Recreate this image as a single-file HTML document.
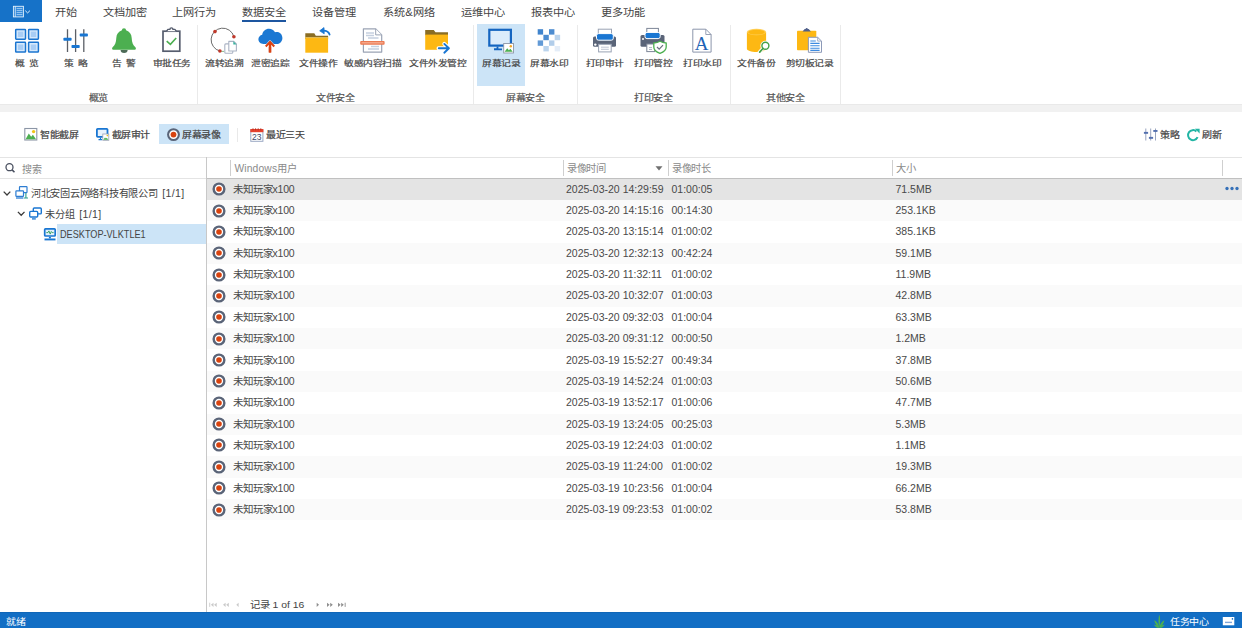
<!DOCTYPE html>
<html lang="zh-CN">
<head>
<meta charset="utf-8">
<title>屏幕录像</title>
<style>
*{box-sizing:border-box;margin:0;padding:0}
html,body{width:1242px;height:628px;overflow:hidden;background:#fff}
body{position:relative;font-family:"Liberation Sans",sans-serif;color:#444;font-size:10.5px}
.abs{position:absolute}
/* top tabs */
#appbtn{position:absolute;left:0;top:0;width:41.8px;height:21.5px;background:#1672c8}
.tab{position:absolute;top:0.9px;height:22px;line-height:23px;font-size:11.2px;color:#444;white-space:nowrap;transform:translateX(-50%) scaleY(0.93)}
#tabul{position:absolute;left:242px;top:19.6px;width:44px;height:2.2px;background:#1d56a0}
/* ribbon */
#ribbon{position:absolute;left:0;top:22px;width:1242px;height:82.2px;background:#fff}
#band{position:absolute;left:0;top:104.2px;width:1242px;height:7.5px;background:#f1f1f1;border-top:1.2px solid #e9e9e9}
.rsep{position:absolute;top:25px;width:1px;height:79px;background:#eaeaea}
.rlbl{position:absolute;top:57.8px;transform:translateX(-50%) scaleY(0.8);font-size:9.8px;color:#424242;line-height:12px;white-space:nowrap;letter-spacing:-0.5px}
.rlbl.sp{word-spacing:2.6px}
.rlbl,.glbl,.tbtn{-webkit-text-stroke:0.22px currentColor}
.rsel{background:#cce4f7}
.srch{height:20px;line-height:20.5px;font-size:10px;color:#8a8a8a}
.glbl{position:absolute;top:91.6px;letter-spacing:-0.5px;transform-origin:50% 50%;font-size:10px;line-height:12px;color:#555;transform:translateX(-50%) scaleY(0.88);white-space:nowrap}
/* toolbar */
.tbtn{position:absolute;top:123.5px;height:20.6px;line-height:21px;font-size:10px;color:#444;white-space:nowrap;letter-spacing:-0.45px;transform:scaleY(0.93)}
/* left */
#hline{position:absolute;left:0;top:157px;width:1242px;height:1px;background:#e4e4e4}
#vsplit{position:absolute;left:206px;top:157px;width:1px;height:455.2px;background:#c8c8c8}
#searchline{position:absolute;left:0;top:178px;width:206px;height:1px;background:#e4e4e4}
.tree{position:absolute;height:20.3px;line-height:20.3px;font-size:10.2px;color:#444;white-space:nowrap;word-spacing:2.2px;letter-spacing:-0.27px}
.tree .cnt{font-size:10.5px;letter-spacing:0.35px}
.tree .host{display:inline-block;font-size:10.5px;transform:scaleX(0.87);transform-origin:0 50%;letter-spacing:0}
/* grid */
#ghead{position:absolute;left:207px;top:158px;width:1035px;height:20px;background:#fff}
#gheadline{position:absolute;left:207px;top:177.7px;width:1035px;height:1.3px;background:#c0c0c0}
.hsep{position:absolute;top:159.5px;width:1px;height:16.5px;background:#cfcfcf}
.htxt{position:absolute;top:158.7px;height:20px;line-height:20.5px;font-size:10.3px;color:#8a8a8a;white-space:nowrap;letter-spacing:-0.4px}
.row{position:absolute;left:207px;width:1035px;height:21.35px;line-height:21.6px;font-size:10.5px;color:#494949;white-space:nowrap}
.row.alt{background:#fafafa}
.row.sel{background:#e4e4e4}
.row span{position:absolute;top:0}
.row .rec{position:absolute;left:5.3px;top:3.6px;width:14px;height:14px}
.c1{left:26.3px;letter-spacing:-0.2px}.c2{left:359px}.c3{left:464.5px}.c4{left:688.5px}
/* status */
#status{position:absolute;left:0;top:612.2px;width:1242px;height:15.8px;background:#126ec4;border-top:1px solid #0f66b8;color:#fff;font-size:10px;line-height:16px}
#status span{top:1.2px;letter-spacing:-0.45px;transform:scaleY(0.88)}
#pager{position:absolute;left:207px;top:596.9px;height:16px;line-height:16px;font-size:10.4px;color:#444;white-space:nowrap;transform:scaleY(0.9)}
</style>
</head>
<body>
<!-- tab bar -->
<div id="appbtn">
<svg class="abs" style="left:0;top:0" width="42" height="22" viewBox="0 0 42 22"><rect x="13.400" y="6.300" width="10" height="10.600" fill="#2f86d8" stroke="#e4f1fc" stroke-width="0.900"/><path d="M15.300 6.300v10.600" stroke="#e4f1fc" stroke-width="0.800"/><path d="M16.600 8.600h5.800M16.600 10.600h5.800M16.600 12.600h5.800M16.600 14.600h5.800" stroke="#9cc9f3" stroke-width="1" fill="none"/><path d="M25.300 10.700l2.300 2.200 2.300-2.200" stroke="#e4f1fc" stroke-width="1" fill="none"/></svg>
</div>
<div class="tab" style="left:66px">开始</div>
<div class="tab" style="left:125px">文档加密</div>
<div class="tab" style="left:194px">上网行为</div>
<div class="tab" style="left:264px">数据安全</div>
<div class="tab" style="left:334px">设备管理</div>
<div class="tab" style="left:409px">系统&amp;网络</div>
<div class="tab" style="left:483px">运维中心</div>
<div class="tab" style="left:553px">报表中心</div>
<div class="tab" style="left:623px">更多功能</div>
<div id="tabul"></div>

<!-- ribbon -->
<div id="ribbon"></div>
<div id="band"></div>
<div class="rsep" style="left:197px"></div>
<div class="rsep" style="left:473px"></div>
<div class="rsep" style="left:577px"></div>
<div class="rsep" style="left:730px"></div>
<div class="rsep" style="left:840px"></div>

<div class="rlbl sp" style="left:27px">概 览</div>
<div class="rlbl sp" style="left:76px">策 略</div>
<div class="rlbl sp" style="left:124px">告 警</div>
<div class="rlbl" style="left:171.5px">审批任务</div>
<div class="rlbl" style="left:224px">流转追溯</div>
<div class="rlbl" style="left:270px">泄密追踪</div>
<div class="rlbl" style="left:318px">文件操作</div>
<div class="rlbl" style="left:372.5px">敏感内容扫描</div>
<div class="rlbl" style="left:437.5px">文件外发管控</div>
<div class="abs rsel" style="left:477px;top:23.9px;width:47.8px;height:62px"></div>
<div class="rlbl" style="left:501px">屏幕记录</div>
<div class="rlbl" style="left:549px">屏幕水印</div>
<div class="rlbl" style="left:604.5px">打印审计</div>
<div class="rlbl" style="left:653px">打印管控</div>
<div class="rlbl" style="left:702px">打印水印</div>
<div class="rlbl" style="left:756px">文件备份</div>
<div class="rlbl" style="left:809.5px">剪切板记录</div>
<svg class="abs" style="left:0;top:0" width="1242" height="110" viewBox="0 0 1242 110">
<!-- overview grid -->
<g fill="#d6e9fc" stroke="#1b75d0" stroke-width="1.5">
<rect x="15.7" y="29.4" width="9.8" height="9.8" rx="0.6"/><rect x="28.6" y="29.4" width="9.8" height="9.8" rx="0.6"/>
<rect x="15.7" y="42.3" width="9.8" height="9.8" rx="0.6"/><rect x="28.6" y="42.3" width="9.8" height="9.8" rx="0.6"/>
</g>
<g fill="#a8cdf5"><rect x="17.9" y="31.6" width="5.4" height="5.4"/><rect x="30.8" y="31.6" width="5.4" height="5.4"/><rect x="17.9" y="44.5" width="5.4" height="5.4"/><rect x="30.8" y="44.5" width="5.4" height="5.4"/></g>
<!-- sliders -->
<g stroke="#5b5f66" stroke-width="1.3" fill="none"><path d="M67.5 29.3V52M75.6 29.3V52M83.8 29.3V52"/></g>
<g fill="#1976d2"><rect x="63.4" y="37.8" width="8.2" height="3" rx="0.8"/><rect x="71.5" y="45" width="8.2" height="3" rx="0.8"/><rect x="79.7" y="33.6" width="8.2" height="3" rx="0.8"/></g>
<!-- bell -->
<path d="M120.6 49.9h7a3.5 3 0 0 1-7 0z" fill="#4d6b57"/>
<path d="M121.900 30.300A2.100 2.100 0 0 1 126.100 30.300C129.700 31.400 131.500 34.300 131.700 38C131.900 42.400 132.900 45 135.400 47.200C136.300 48 136 49.700 134.800 49.700H113.200C112 49.700 111.700 48 112.600 47.200C115.100 45 116.100 42.400 116.300 38C116.500 34.300 118.300 31.400 121.900 30.300Z" fill="#4caf50"/>
<!-- clipboard check -->
<rect x="163" y="31.200" width="16.800" height="20" fill="#fff" stroke="#565d6e" stroke-width="1.7"/>
<path d="M166.600 31.200l1.300-1.800h2a1.500 1.500 0 0 1 3 0h2l1.300 1.800" fill="#fff" stroke="#565d6e" stroke-width="1.400" stroke-linejoin="round"/>
<path d="M166.700 41.100l3.700 3.300 5.800-6.400" fill="none" stroke="#4caf50" stroke-width="1.600"/>
<!-- trace circle -->
<path d="M233.900 36.600A11.600 11.600 0 1 0 219.900 51" fill="none" stroke="#5a5a5a" stroke-width="0.900"/>
<path d="M219.900 51A11.600 11.600 0 0 0 224 51.400" fill="none" stroke="#7ab27a" stroke-width="0.900"/>
<g fill="#c0392b"><circle cx="215" cy="31.600" r="1.800"/><circle cx="233.900" cy="36.800" r="1.800"/><circle cx="219.900" cy="51" r="1.800"/></g>
<rect x="224.800" y="43.900" width="8" height="9.300" rx="1" fill="#fff" stroke="#aab3c4" stroke-width="1.100"/>
<path d="M228.800 41.400h5l2.600 2.600v7h-7.600z" fill="#fff" stroke="#aab3c4" stroke-width="1.100" stroke-linejoin="round"/>
<path d="M233.300 41.200l3.300 3.300h-3.300z" fill="#3bb3a0"/>
<!-- cloud upload -->
<path d="M263.500 44c-2.900 0-5.100-2.100-5.100-4.700 0-2.300 1.600-4.100 3.800-4.600 0.500-3.500 3.300-6 6.800-6 2.600 0 4.900 1.400 6 3.600 0.600-0.200 1.300-0.300 1.900-0.300 3.100 0 5.500 2.600 5.500 6 0 3.300-2.400 6-5.400 6z" fill="#1b78d3"/>
<path d="M270 40.400l5 5.400-1.500 1.400-2.300-2.500v7.800h-2.400v-7.800l-2.300 2.500-1.500-1.400z" fill="#d84315" stroke="#fff" stroke-width="1" paint-order="stroke"/>
<path d="M268.800 47v5.500h2.400V47z" fill="#d84315"/>
<!-- folder op -->
<path d="M305.300 33.200h9l1.500 2.500h12.300v3h-22.800z" fill="#8a6d24"/>
<rect x="305.300" y="37.600" width="22.800" height="15.100" fill="#fdb813"/>
<path d="M305.300 37.600h22.800" stroke="#ffe08a" stroke-width="0.600"/>
<path d="M329.600 34.600c-0.800-2.600-3.200-4.100-6.600-4" fill="none" stroke="#1976d2" stroke-width="1.800" stroke-linecap="round"/>
<path d="M324 27.600l-4.300 3.200 4.500 3z" fill="#1976d2" stroke="#1976d2" stroke-width="0.800" stroke-linejoin="round"/>
<!-- sensitive scan -->
<path d="M363.400 28.900h12.300l6 6v17.200h-18.300z" fill="#fff" stroke="#9aa3b4" stroke-width="1.200" stroke-linejoin="round"/>
<path d="M375.700 28.900v6h6" fill="#fff" stroke="#9aa3b4" stroke-width="1" stroke-linejoin="round"/>
<g stroke="#c5d0df" stroke-width="1.300"><path d="M366 33h8M366 35.500h8M368 38h10.500M371 46.500h8M368 49h11"/></g>
<rect x="360.200" y="40.900" width="24.400" height="3.900" rx="1" fill="#ec7a52"/>
<path d="M361.500 42.850h21.800" stroke="#f9c6b2" stroke-width="0.900"/>
<!-- folder out -->
<path d="M425.200 29.900h8.600l1.700 2.400h12.500v3h-22.800z" fill="#8a6d24"/>
<rect x="425.200" y="34.600" width="22.800" height="15.200" fill="#fdb813"/>
<path d="M438.500 48.300h10M444.300 43.900l4.600 4.400-4.600 4.400" fill="none" stroke="#fff" stroke-width="4" stroke-linecap="round" stroke-linejoin="round"/>
<path d="M438.800 48.300h9.500M444.300 43.900l4.600 4.400-4.600 4.400" fill="none" stroke="#1976d2" stroke-width="1.900" stroke-linecap="round" stroke-linejoin="round"/>
<!-- screen record (selected) -->
<rect x="489.300" y="29.800" width="21.600" height="15.800" fill="#dcecfb" stroke="#1565c0" stroke-width="2.200"/>
<path d="M497.500 46.500v2.600h-3.500M494 49.300h8" stroke="#1565c0" stroke-width="1.800" fill="none"/>
<rect x="503.700" y="43.500" width="9.800" height="9.500" fill="#fff" stroke="#8c96a6" stroke-width="0.900"/>
<path d="M504.600 51.800l2.600-3.600 1.700 2 1.500-1.400 2.300 3z" fill="#4caf50"/>
<circle cx="510.800" cy="46.200" r="1.200" fill="#f5a623"/>
<!-- screen watermark -->
<g fill="#1f6fc4">
<rect x="537.700" y="29.200" width="5.400" height="5.400" opacity="0.850"/><rect x="549" y="29.200" width="5.400" height="5.400" opacity="0.800"/>
<rect x="543.400" y="34.800" width="5.400" height="5.400" opacity="0.800"/><rect x="554.700" y="34.800" width="5.400" height="5.400" opacity="0.300"/>
<rect x="537.700" y="40.400" width="5.400" height="5.400" opacity="0.700"/><rect x="549" y="40.400" width="5.400" height="5.400" opacity="0.350"/>
<rect x="543.400" y="46" width="5.400" height="5.400" opacity="0.300"/><rect x="554.700" y="46" width="5.400" height="5.400" opacity="0.120"/>
</g>
<!-- printer audit -->
<rect x="598.300" y="29.200" width="13.200" height="7" fill="#fff" stroke="#9aa3b4" stroke-width="1"/>
<rect x="593" y="36.400" width="23" height="10.400" rx="1.500" fill="#5a6478"/>
<rect x="596.500" y="33.600" width="16.800" height="6.600" rx="2" fill="#1976d2" stroke="#fff" stroke-width="1"/>
<circle cx="595.300" cy="44.600" r="1.200" fill="#fff"/>
<rect x="598.600" y="44.300" width="12.600" height="7.600" fill="#fff" stroke="#9aa3b4" stroke-width="1"/>
<path d="M601 47.200h7.800M601 49.300h7.800" stroke="#b8c0cf" stroke-width="0.900"/>
<!-- printer control -->
<rect x="646.800" y="28.400" width="11.600" height="6" fill="#fff" stroke="#7d8697" stroke-width="1"/>
<rect x="640.500" y="35" width="24" height="11.800" rx="1.500" fill="#5a6478"/>
<rect x="645" y="32.400" width="15.200" height="6.200" rx="2" fill="#1976d2" stroke="#fff" stroke-width="1"/>
<circle cx="643" cy="39" r="1" fill="#fff"/>
<rect x="646.800" y="44" width="8" height="7.600" fill="#fff" stroke="#7d8697" stroke-width="1"/>
<path d="M649 47.600h3M649 49.500h3" stroke="#9aa3b4" stroke-width="0.800"/>
<path d="M660 41.200c2 1.200 4 1.700 6.200 1.800v4c0 3-2.400 5-6.200 6.300-3.800-1.300-6.200-3.300-6.200-6.300v-4c2.200-0.100 4.200-0.600 6.200-1.800z" fill="#fff" stroke="#4caf50" stroke-width="1.300" stroke-linejoin="round"/>
<path d="M657 47l2.200 2.200 3.800-4" fill="none" stroke="#6b7280" stroke-width="1.200"/>
<!-- print watermark doc A -->
<path d="M692.800 29.200h13l5.300 5.300v17.600h-18.300z" fill="#fff" stroke="#8c96ac" stroke-width="1" stroke-linejoin="round"/>
<path d="M705.800 29.200v5.300h5.300" fill="none" stroke="#8c96ac" stroke-width="0.900"/>
<text x="701.700" y="49.600" font-family="Liberation Serif,serif" font-size="19" fill="#1e63b5" text-anchor="middle">A</text>
<!-- file backup -->
<path d="M746.900 32v16.800c0 1.800 4.300 3.200 9.600 3.200s9.600-1.400 9.600-3.200V32z" fill="#fdb813"/>
<ellipse cx="756.500" cy="32" rx="9.600" ry="3.300" fill="#ffcf55"/><ellipse cx="756.500" cy="32.200" rx="8.300" ry="2.400" fill="#fdb813"/>
<path d="M762.800 48.500l-3.300 3.700" stroke="#fff" stroke-width="3.400" stroke-linecap="round"/>
<circle cx="765.400" cy="45.800" r="3.500" fill="#fff" stroke="#fff" stroke-width="3"/>
<circle cx="765.400" cy="45.800" r="3.500" fill="#fff" stroke="#43a047" stroke-width="1.400"/>
<path d="M762.900 48.500l-3.200 3.600" stroke="#43a047" stroke-width="1.700" stroke-linecap="round"/>
<!-- clipboard record -->
<rect x="797" y="30.800" width="19.300" height="19.500" rx="0.800" fill="#fdb813"/>
<path d="M802.500 31.600l2.200-2.600h0.900a1.100 1.100 0 0 1 2.200 0h0.900l2.200 2.600z" fill="#50608a"/>
<path d="M808.400 37.300h9.300l3.800 3.800v11.200h-13.100z" fill="#fff" stroke="#8c9ab8" stroke-width="1" stroke-linejoin="round"/>
<path d="M817.700 37.300v3.800h3.800" fill="none" stroke="#8c9ab8" stroke-width="0.800"/>
<g stroke="#3d8be0" stroke-width="1.100"><path d="M810.300 41h5.500M810.300 43.400h9.300M810.300 45.800h9.300M810.300 48.200h9.300M810.300 50.400h9.300"/></g>
</svg>


<div class="glbl" style="left:98px">概览</div>
<div class="glbl" style="left:335px">文件安全</div>
<div class="glbl" style="left:525px">屏幕安全</div>
<div class="glbl" style="left:653px">打印安全</div>
<div class="glbl" style="left:785px">其他安全</div>

<!-- toolbar -->

<div class="abs" style="left:158.8px;top:124px;width:70.2px;height:20.4px;background:#cce4f7"></div>
<div class="abs" style="left:237px;top:128px;width:1px;height:13.5px;background:#e9e9e9"></div>
<div class="tbtn" style="left:40.2px">智能截屏</div>
<div class="tbtn" style="left:111.7px">截屏审计</div>
<div class="tbtn" style="left:182.2px">屏幕录像</div>
<div class="tbtn" style="left:266px">最近三天</div>
<div class="tbtn" style="left:1160px">策略</div>
<div class="tbtn" style="left:1202.2px">刷新</div>
<svg class="abs" style="left:0;top:110px" width="1242" height="46" viewBox="0 110 1242 46">
<!-- photo -->
<rect x="24.800" y="128.500" width="12" height="11.500" fill="#fff" stroke="#8c96a6" stroke-width="1.100"/>
<path d="M25.600 139.200l3.200-5.600 2.400 3.100 1.700-1.900 3.100 4.400z" fill="#4caf50"/>
<circle cx="33.600" cy="131.600" r="1.700" fill="#f0c419"/>
<!-- monitor w/ photo -->
<rect x="96.900" y="128.800" width="10.600" height="8" rx="0.800" fill="#e8f2fc" stroke="#1976d2" stroke-width="1.800"/>
<path d="M100.500 137.400v1.800M98.500 139.600h3.500" stroke="#1976d2" stroke-width="1.200"/>
<rect x="102.800" y="134" width="6" height="6.300" fill="#fff" stroke="#9aa3b4" stroke-width="0.800"/>
<path d="M103.300 139.700l1.700-2.300 1 1.100 0.800-0.700 1.500 1.900z" fill="#4caf50"/>
<circle cx="107.300" cy="135.600" r="0.800" fill="#f2c21a"/>
<!-- record -->
<circle cx="173.500" cy="134.600" r="5.400" fill="#fff" stroke="#5a6478" stroke-width="2.100"/>
<circle cx="173.500" cy="134.600" r="2.900" fill="#d8430f"/>
<!-- calendar -->
<rect x="250.800" y="130" width="12.100" height="11.300" fill="#fff" stroke="#9aa8c4" stroke-width="1"/>
<rect x="250.300" y="129" width="13.100" height="3.200" fill="#e5422e"/>
<path d="M253 128.300v2M255.600 128.300v2M258.200 128.300v2M260.800 128.300v2" stroke="#b52a1c" stroke-width="0.900"/>
<text x="256.850" y="140.200" font-family="Liberation Sans,sans-serif" font-size="8.500" fill="#3c4a6a" text-anchor="middle">23</text>
<!-- sliders small -->
<g stroke="#8d9bb8" stroke-width="0.900"><path d="M1145.800 128.500v12M1150.700 128.500v12M1155.500 128.500v12"/></g>
<g fill="#536fae"><rect x="1143.900" y="131.900" width="4.200" height="1.900"/><rect x="1148.900" y="136.900" width="4.200" height="1.900"/><rect x="1153.300" y="130" width="4.200" height="1.900"/></g>
<!-- refresh -->
<path d="M1197.600 137.200a5 5 0 1 1-1.200-5.800" fill="none" stroke="#22b5a4" stroke-width="2"/>
<path d="M1194.900 128.700h4.700v4.900z" fill="#22b5a4"/>
</svg>


<!-- left panel -->
<div id="hline"></div>
<div id="searchline"></div>
<div id="vsplit"></div>

<div class="abs" style="left:57px;top:224px;width:149px;height:20.2px;background:#cce4f7"></div>
<div class="abs srch" style="left:22px;top:159.5px">搜索</div>
<div class="tree" style="left:31px;top:183.3px">河北安固云网络科技有限公司 <span class="cnt">[1/1]</span></div>
<div class="tree" style="left:45.4px;top:203.6px">未分组 <span class="cnt">[1/1]</span></div>
<div class="tree" style="left:59.8px;top:223.9px"><span class="host">DESKTOP-VLKTLE1</span></div>
<svg class="abs" style="left:0;top:158px" width="206" height="92" viewBox="0 158 206 92">
<!-- search -->
<circle cx="9.500" cy="167.200" r="3.500" fill="none" stroke="#4a5060" stroke-width="1.300"/>
<path d="M12.100 169.900l2.400 2.400" stroke="#4a5060" stroke-width="1.600"/>
<!-- chevrons -->
<path d="M3.700 191.600l3.300 3.400 3.300-3.400" fill="none" stroke="#3a3a3a" stroke-width="1.300"/>
<path d="M17.900 211.900l3.300 3.400 3.300-3.400" fill="none" stroke="#3a3a3a" stroke-width="1.300"/>
<!-- company icon: two monitors -->
<rect x="19.500" y="186.700" width="7.500" height="6" rx="0.600" fill="#fff" stroke="#2d7dd2" stroke-width="1.200"/>
<path d="M25.900 193v4.600M24 198h4" stroke="#2a9d8f" stroke-width="1.100"/>
<rect x="15.900" y="190.900" width="7.600" height="5.400" rx="0.600" fill="#fff" stroke="#2d7dd2" stroke-width="1.200"/>
<path d="M16 198h7.400" stroke="#2d7dd2" stroke-width="1.300"/>
<!-- group icon -->
<rect x="33.300" y="208" width="8" height="5.900" rx="1" fill="#fff" stroke="#1976d2" stroke-width="1.400"/>
<rect x="29.700" y="211.400" width="8" height="5.600" rx="1" fill="#fff" stroke="#1976d2" stroke-width="1.400"/>
<path d="M32 218.900h3.800" stroke="#1976d2" stroke-width="1.300"/>
<!-- desktop icon -->
<rect x="44.700" y="228.800" width="10.500" height="7.200" rx="0.800" fill="#e3f0fd" stroke="#1976d2" stroke-width="1.700"/>
<path d="M46.300 232.600h1.700l0.900-1.700 1.300 3.200 1.100-2.600 0.900 1.100h1.400" fill="none" stroke="#2e9d5b" stroke-width="0.900"/>
<path d="M49.900 236.800v1.600" stroke="#1976d2" stroke-width="2"/>
<rect x="44.500" y="238.500" width="11" height="1.900" fill="#1976d2"/>
</svg>


<!-- grid -->
<div id="ghead"></div>
<div class="hsep" style="left:230px"></div>
<div class="hsep" style="left:563px"></div>
<div class="hsep" style="left:668px"></div>
<div class="hsep" style="left:892px"></div>
<div class="hsep" style="left:1222px"></div>
<div class="htxt" style="left:234.4px"><span style="letter-spacing:0.15px">Windows</span>用户</div>
<div class="htxt" style="left:567px">录像时间</div>
<div class="htxt" style="left:672px">录像时长</div>
<div class="htxt" style="left:896px">大小</div>
<svg class="abs" style="left:655px;top:165.5px" width="8" height="5" viewBox="0 0 8 5"><path d="M0.5 0.3h7L4 4.4z" fill="#707070"/></svg>
<div class="row sel" style="top:178.70px"><svg class="rec" viewBox="0 0 14 14"><circle cx="7" cy="7" r="5.35" fill="#fff" stroke="#5a6478" stroke-width="2.4"/><circle cx="7" cy="7" r="2.8" fill="#d8430f"/></svg><span class="c1">未知玩家x100</span><span class="c2">2025-03-20 14:29:59</span><span class="c3">01:00:05</span><span class="c4">71.5MB</span></div>
<div class="row alt" style="top:200.05px"><svg class="rec" viewBox="0 0 14 14"><circle cx="7" cy="7" r="5.35" fill="#fff" stroke="#5a6478" stroke-width="2.4"/><circle cx="7" cy="7" r="2.8" fill="#d8430f"/></svg><span class="c1">未知玩家x100</span><span class="c2">2025-03-20 14:15:16</span><span class="c3">00:14:30</span><span class="c4">253.1KB</span></div>
<div class="row" style="top:221.40px"><svg class="rec" viewBox="0 0 14 14"><circle cx="7" cy="7" r="5.35" fill="#fff" stroke="#5a6478" stroke-width="2.4"/><circle cx="7" cy="7" r="2.8" fill="#d8430f"/></svg><span class="c1">未知玩家x100</span><span class="c2">2025-03-20 13:15:14</span><span class="c3">01:00:02</span><span class="c4">385.1KB</span></div>
<div class="row alt" style="top:242.75px"><svg class="rec" viewBox="0 0 14 14"><circle cx="7" cy="7" r="5.35" fill="#fff" stroke="#5a6478" stroke-width="2.4"/><circle cx="7" cy="7" r="2.8" fill="#d8430f"/></svg><span class="c1">未知玩家x100</span><span class="c2">2025-03-20 12:32:13</span><span class="c3">00:42:24</span><span class="c4">59.1MB</span></div>
<div class="row" style="top:264.10px"><svg class="rec" viewBox="0 0 14 14"><circle cx="7" cy="7" r="5.35" fill="#fff" stroke="#5a6478" stroke-width="2.4"/><circle cx="7" cy="7" r="2.8" fill="#d8430f"/></svg><span class="c1">未知玩家x100</span><span class="c2">2025-03-20 11:32:11</span><span class="c3">01:00:02</span><span class="c4">11.9MB</span></div>
<div class="row alt" style="top:285.45px"><svg class="rec" viewBox="0 0 14 14"><circle cx="7" cy="7" r="5.35" fill="#fff" stroke="#5a6478" stroke-width="2.4"/><circle cx="7" cy="7" r="2.8" fill="#d8430f"/></svg><span class="c1">未知玩家x100</span><span class="c2">2025-03-20 10:32:07</span><span class="c3">01:00:03</span><span class="c4">42.8MB</span></div>
<div class="row" style="top:306.80px"><svg class="rec" viewBox="0 0 14 14"><circle cx="7" cy="7" r="5.35" fill="#fff" stroke="#5a6478" stroke-width="2.4"/><circle cx="7" cy="7" r="2.8" fill="#d8430f"/></svg><span class="c1">未知玩家x100</span><span class="c2">2025-03-20 09:32:03</span><span class="c3">01:00:04</span><span class="c4">63.3MB</span></div>
<div class="row alt" style="top:328.15px"><svg class="rec" viewBox="0 0 14 14"><circle cx="7" cy="7" r="5.35" fill="#fff" stroke="#5a6478" stroke-width="2.4"/><circle cx="7" cy="7" r="2.8" fill="#d8430f"/></svg><span class="c1">未知玩家x100</span><span class="c2">2025-03-20 09:31:12</span><span class="c3">00:00:50</span><span class="c4">1.2MB</span></div>
<div class="row" style="top:349.50px"><svg class="rec" viewBox="0 0 14 14"><circle cx="7" cy="7" r="5.35" fill="#fff" stroke="#5a6478" stroke-width="2.4"/><circle cx="7" cy="7" r="2.8" fill="#d8430f"/></svg><span class="c1">未知玩家x100</span><span class="c2">2025-03-19 15:52:27</span><span class="c3">00:49:34</span><span class="c4">37.8MB</span></div>
<div class="row alt" style="top:370.85px"><svg class="rec" viewBox="0 0 14 14"><circle cx="7" cy="7" r="5.35" fill="#fff" stroke="#5a6478" stroke-width="2.4"/><circle cx="7" cy="7" r="2.8" fill="#d8430f"/></svg><span class="c1">未知玩家x100</span><span class="c2">2025-03-19 14:52:24</span><span class="c3">01:00:03</span><span class="c4">50.6MB</span></div>
<div class="row" style="top:392.20px"><svg class="rec" viewBox="0 0 14 14"><circle cx="7" cy="7" r="5.35" fill="#fff" stroke="#5a6478" stroke-width="2.4"/><circle cx="7" cy="7" r="2.8" fill="#d8430f"/></svg><span class="c1">未知玩家x100</span><span class="c2">2025-03-19 13:52:17</span><span class="c3">01:00:06</span><span class="c4">47.7MB</span></div>
<div class="row alt" style="top:413.55px"><svg class="rec" viewBox="0 0 14 14"><circle cx="7" cy="7" r="5.35" fill="#fff" stroke="#5a6478" stroke-width="2.4"/><circle cx="7" cy="7" r="2.8" fill="#d8430f"/></svg><span class="c1">未知玩家x100</span><span class="c2">2025-03-19 13:24:05</span><span class="c3">00:25:03</span><span class="c4">5.3MB</span></div>
<div class="row" style="top:434.90px"><svg class="rec" viewBox="0 0 14 14"><circle cx="7" cy="7" r="5.35" fill="#fff" stroke="#5a6478" stroke-width="2.4"/><circle cx="7" cy="7" r="2.8" fill="#d8430f"/></svg><span class="c1">未知玩家x100</span><span class="c2">2025-03-19 12:24:03</span><span class="c3">01:00:02</span><span class="c4">1.1MB</span></div>
<div class="row alt" style="top:456.25px"><svg class="rec" viewBox="0 0 14 14"><circle cx="7" cy="7" r="5.35" fill="#fff" stroke="#5a6478" stroke-width="2.4"/><circle cx="7" cy="7" r="2.8" fill="#d8430f"/></svg><span class="c1">未知玩家x100</span><span class="c2">2025-03-19 11:24:00</span><span class="c3">01:00:02</span><span class="c4">19.3MB</span></div>
<div class="row" style="top:477.60px"><svg class="rec" viewBox="0 0 14 14"><circle cx="7" cy="7" r="5.35" fill="#fff" stroke="#5a6478" stroke-width="2.4"/><circle cx="7" cy="7" r="2.8" fill="#d8430f"/></svg><span class="c1">未知玩家x100</span><span class="c2">2025-03-19 10:23:56</span><span class="c3">01:00:04</span><span class="c4">66.2MB</span></div>
<div class="row alt" style="top:498.95px"><svg class="rec" viewBox="0 0 14 14"><circle cx="7" cy="7" r="5.35" fill="#fff" stroke="#5a6478" stroke-width="2.4"/><circle cx="7" cy="7" r="2.8" fill="#d8430f"/></svg><span class="c1">未知玩家x100</span><span class="c2">2025-03-19 09:23:53</span><span class="c3">01:00:02</span><span class="c4">53.8MB</span></div>

<div id="gheadline"></div>
<svg class="abs" style="left:1225px;top:186px" width="14" height="5" viewBox="0 0 14 5"><circle cx="2" cy="2.5" r="1.65" fill="#3570b8"/><circle cx="7" cy="2.5" r="1.65" fill="#3570b8"/><circle cx="12" cy="2.5" r="1.65" fill="#3570b8"/></svg>


<div id="pager" style="left:249.6px">记录 1 of 16</div>
<svg class="abs" style="left:207px;top:598px" width="150" height="14" viewBox="207 598 150 14">
<g fill="#cacaca">
<rect x="209.300" y="602.700" width="0.900" height="4.200"/><path d="M213.500 602.700v4.200l-2.600-2.100zM216.700 602.700v4.200l-2.600-2.100z"/>
<path d="M225.600 602.700v4.200l-2.600-2.100zM228.800 602.700v4.200l-2.600-2.100z"/>
<path d="M238.600 602.700v4.200l-2.300-2.100z"/>
</g>
<g fill="#8e8e8e">
<path d="M316.700 602.700v4.200l2.300-2.100z"/>
<path d="M327 602.700v4.200l2.600-2.100zM330.200 602.700v4.200l2.600-2.100z"/>
<path d="M338 602.700v4.200l2.600-2.100zM341.200 602.700v4.200l2.600-2.100z"/><rect x="344.700" y="602.700" width="0.900" height="4.200"/>
</g>
</svg>


<!-- status bar -->
<div id="status"><span class="abs" style="left:6px">就绪</span>
<span class="abs" style="left:1170.3px">任务中心</span>
<svg class="abs" style="left:1150px;top:-1px" width="92" height="15.8" viewBox="1150 612.200 92 15.800">
<g fill="#4caf50">
<path d="M1159.300 615c1 2.500 1.200 8 0 13-1.200-5-1-10.500 0-13z"/>
<path d="M1154.200 620.400c2.600 1 4.400 3.600 5.100 7.600-2.600-1.600-4.300-4-5.100-7.600z"/>
<path d="M1164.400 620.400c-2.600 1-4.400 3.600-5.100 7.600 2.600-1.600 4.300-4 5.100-7.600z"/>
<path d="M1153.800 624.600c2.400 0.300 4.200 1.400 5.500 3.400h-2c-1.400-0.700-2.600-1.800-3.500-3.400z"/>
<path d="M1164.800 624.600c-2.400 0.300-4.200 1.400-5.500 3.400h2c1.400-0.700 2.600-1.800 3.500-3.400z"/>
</g>
<rect x="1222.800" y="617.200" width="11.500" height="8.300" fill="#fff"/>
<path d="M1225 622.600h7" stroke="#7fa6d8" stroke-width="1.400"/>
<rect x="1231.800" y="618.300" width="1.300" height="1.600" fill="#126ec4"/>
</svg>

</div>
</body>
</html>
